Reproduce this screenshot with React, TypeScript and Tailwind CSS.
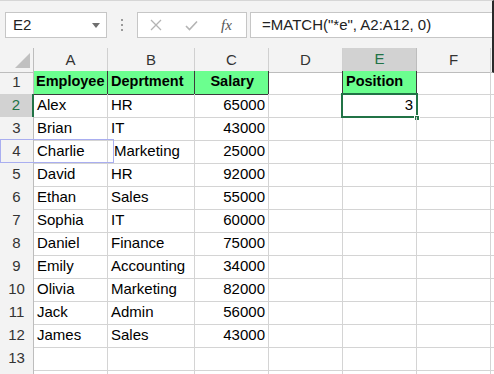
import React from "react";

const rows: [string, string, string][] = [
  ["Alex", "HR", "65000"],
  ["Brian", "IT", "43000"],
  ["Charlie", "Marketing", "25000"],
  ["David", "HR", "92000"],
  ["Ethan", "Sales", "55000"],
  ["Sophia", "IT", "60000"],
  ["Daniel", "Finance", "75000"],
  ["Emily", "Accounting", "34000"],
  ["Olivia", "Marketing", "82000"],
  ["Jack", "Admin", "56000"],
  ["James", "Sales", "43000"],
];

const cols = ["A", "B", "C", "D", "E", "F"];
const grid =
  "grid grid-cols-[34px_74px_87px_74px_74px_74px_74px_1fr]";

function Toolbar() {
  return (
    <div className="h-[48px] bg-[#f3f3f3] border-t border-[#d6d6d6] border-r-2 border-r-[#2a2a2a] flex items-start pt-[11px]">
      <div className="ml-[5px] w-[102px] h-[26px] bg-white border border-[#c6c6c6] flex items-center justify-between pl-[7px] pr-[6px]">
        <span className="text-[15px] text-[#222]">E2</span>
        <span className="w-0 h-0 border-l-[4px] border-r-[4px] border-t-[5px] border-l-transparent border-r-transparent border-t-[#6f6f6f]" />
      </div>
      <div className="w-[30px] h-[26px] flex flex-col items-center justify-center gap-[3px]">
        <span className="w-[2px] h-[2px] bg-[#9a9a9a]" />
        <span className="w-[2px] h-[2px] bg-[#9a9a9a]" />
        <span className="w-[2px] h-[2px] bg-[#9a9a9a]" />
      </div>
      <div className="w-[110px] h-[26px] bg-white border border-[#c6c6c6] flex items-center">
        <svg width="12" height="12" viewBox="0 0 12 12" className="ml-[12px]">
          <path d="M1 1L11 11M11 1L1 11" stroke="#b4b4b4" strokeWidth="1.3" fill="none" />
        </svg>
        <svg width="13" height="11" viewBox="0 0 13 11" className="ml-[23px]">
          <path d="M1 6L4.5 9.5L12 1.5" stroke="#b4b4b4" strokeWidth="1.6" fill="none" />
        </svg>
        <span className="ml-[23px] text-[15px] italic text-[#555] font-['Liberation_Serif',serif]">
          fx
        </span>
      </div>
      <div className="ml-[3px] flex-1 h-[26px] bg-white border border-[#c6c6c6] border-r-0 flex items-center pl-[11px]">
        <span className="text-[15px] text-[#222]">=MATCH("*e", A2:A12, 0)</span>
      </div>
    </div>
  );
}

function HeaderRow() {
  return (
    <div className={`${grid} h-[23px]`}>
      <div className="bg-[#f3f3f3] border-r border-b border-[#bdbdbd] relative">
        <svg width="15" height="15" viewBox="0 0 15 15" className="absolute right-[3px] bottom-[4px]">
          <path d="M15 0L15 15L0 15Z" fill="#c0c0c0" />
        </svg>
      </div>
      {cols.map((c) =>
        c === "E" ? (
          <div
            key={c}
            className="bg-[#d2d2d2] border-r border-[#bdbdbd] border-b-2 border-b-[#217346] flex items-center justify-center text-[15px] text-[#217346]"
          >
            {c}
          </div>
        ) : (
          <div
            key={c}
            className="bg-[#f3f3f3] border-r border-b border-[#d0d0d0] border-b-[#bdbdbd] flex items-center justify-center text-[15px] text-[#333]"
          >
            {c}
          </div>
        )
      )}
      <div className="bg-[#f3f3f3] border-b border-[#bdbdbd] border-r-2 border-r-[#2a2a2a]" />
    </div>
  );
}

function RowHead({ n, active }: { n?: number; active?: boolean }) {
  return active ? (
    <div className="bg-[#d2d2d2] border-b border-[#d0d0d0] border-r-2 border-r-[#217346] flex items-center justify-center text-[15px] text-[#217346]">
      {n}
    </div>
  ) : (
    <div className="bg-[#f3f3f3] border-b border-[#d0d0d0] border-r border-r-[#bdbdbd] flex items-center justify-center text-[15px] text-[#333]">
      {n}
    </div>
  );
}

const cell = "border-r border-b border-[#d4d4d4] flex items-center text-[15px] text-black";
const green = "bg-[#6bff8f] border-r border-b border-[#3b3b3b] flex items-center text-[14.5px] font-bold text-black";

export default function App() {
  return (
    <div className="w-[494px] h-[374px] overflow-hidden bg-white font-['Liberation_Sans',Arial,sans-serif] relative">
      <Toolbar />
      <HeaderRow />

      {/* row 1: headers with green fill */}
      <div className={`${grid} h-[23px]`}>
        <RowHead n={1} />
        <div className={`${green} pl-[2px]`}>Employee</div>
        <div className={`${green} pl-[3px]`}>Deprtment</div>
        <div className={`${green} justify-end pr-[14px]`}>Salary</div>
        <div className={cell} />
        <div className={`${green} pl-[3px] -ml-px border-l border-[#2d5c3e]`}>Position</div>
        <div className={cell} />
        <div className="border-b border-[#d4d4d4]" />
      </div>

      {rows.map((r, i) => (
        <div key={i} className={`${grid} h-[23px]`}>
          <RowHead n={i + 2} active={i === 0} />
          <div className={`${cell} pl-[3px]`}>{r[0]}</div>
          <div className={`${cell} ${i === 2 ? "pl-[6px]" : "pl-[3px]"}`}>{r[1]}</div>
          <div className={`${cell} justify-end pr-[3px]`}>{r[2]}</div>
          <div className={cell} />
          <div className={`${cell} relative justify-end pr-[3px]`}>
            {i === 0 && (
              <>
                <span className="relative">3</span>
                <span className="absolute -left-[2px] -top-[1px] right-[-2px] bottom-[-1px] border-2 border-[#217346]" />
                <span className="absolute right-[-4px] bottom-[-4px] w-[6px] h-[6px] bg-[#217346] border border-white" />
              </>
            )}
          </div>
          <div className={cell} />
          <div className="border-b border-[#d4d4d4]" />
        </div>
      ))}

      <div className={`${grid} h-[23px]`}>
        <RowHead n={13} />
        <div className={cell} />
        <div className={cell} />
        <div className={cell} />
        <div className={cell} />
        <div className={cell} />
        <div className={cell} />
        <div className="border-b border-[#d4d4d4]" />
      </div>
      <div className={`${grid} h-[23px]`}>
        <RowHead />
        <div className={cell} />
        <div className={cell} />
        <div className={cell} />
        <div className={cell} />
        <div className={cell} />
        <div className={cell} />
        <div />
      </div>

      {/* stray highlight box around row 4 */}
      <div className="absolute left-0 top-[139px] w-[114px] h-[24px] border-[1.5px] border-[#a9aef0] pointer-events-none" />
    </div>
  );
}
